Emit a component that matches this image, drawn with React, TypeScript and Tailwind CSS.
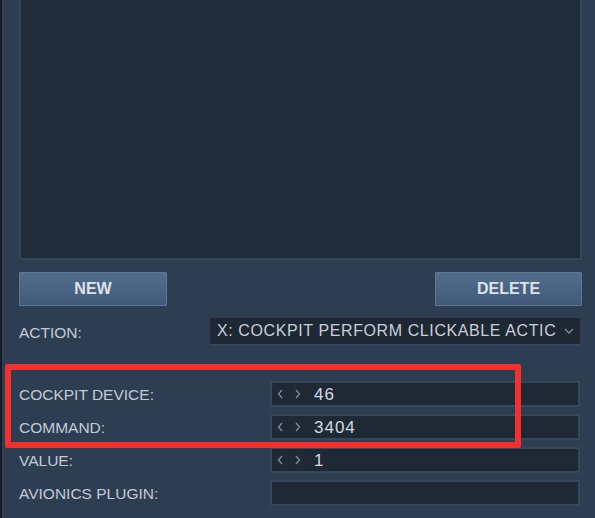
const font = { fontFamily: '"Liberation Sans", Arial, sans-serif' };

function Arrows() {
  return (
    <div className="flex items-center gap-[12px] pl-[5px] pr-[13px]">
      <svg width="6" height="10" viewBox="0 0 6 10">
        <path d="M5 1 L1.5 5 L5 9" fill="none" stroke="#7d8996" strokeWidth="1.4" />
      </svg>
      <svg width="6" height="10" viewBox="0 0 6 10">
        <path d="M1 1 L4.5 5 L1 9" fill="none" stroke="#7d8996" strokeWidth="1.4" />
      </svg>
    </div>
  );
}

function Row({ label, value, spin }: { label: string; value?: string; spin?: boolean }) {
  return (
    <div className="flex items-center h-[26px]">
      <div className="w-[251px] pt-[2px] text-[15.5px] text-[#c3cad3] leading-none">{label}</div>
      <div className="w-[310px] h-[26px] flex items-center bg-[#1f2935] border-2 border-[#37475a]">
        {spin && <Arrows />}
        {value && (
          <span className="text-[17px] tracking-[1px] text-[#d3d9e0] leading-none">{value}</span>
        )}
      </div>
    </div>
  );
}

function Btn({ label, w }: { label: string; w: string }) {
  return (
    <div
      className={`${w} h-[34px] flex items-center justify-center bg-gradient-to-b from-[#536d8c] to-[#415a79] border border-[#5c7797] rounded-[1px] text-[16px] font-bold text-[#dde3ea]`}
    >
      {label}
    </div>
  );
}

export default function App() {
  return (
    <div
      className="relative w-[595px] h-[518px] overflow-hidden bg-[#2d3e53] border-l-2 border-[#151c26]"
      style={font}
    >
      <div className="pl-[17px] flex flex-col">
        <div className="w-[563px] h-[260px] bg-[#212c3a] border-2 border-t-0 border-[#34465b]" />

        <div className="mt-[12px] flex justify-between w-[563px]">
          <Btn label="NEW" w="w-[148px]" />
          <Btn label="DELETE" w="w-[147px]" />
        </div>

        <div className="mt-[12px] flex items-center h-[28px]">
          <div className="w-[191px] pt-[2px] text-[15.5px] text-[#c3cad3] leading-none">ACTION:</div>
          <div className="w-[370px] h-[28px] flex items-center bg-[#1e2834] border-b-2 border-[#36475a]">
            <div className="w-[352px] pl-[7px] whitespace-nowrap text-[16px] tracking-[0.6px] text-[#c8cfd7] leading-none">
              X: COCKPIT PERFORM CLICKABLE ACTIC
            </div>
            <svg width="10" height="6" viewBox="0 0 10 6" className="ml-[2px]">
              <path d="M1 1 L5 5 L9 1" fill="none" stroke="#7d8996" strokeWidth="1.4" />
            </svg>
          </div>
        </div>

        <div className="mt-[35px] flex flex-col gap-[7px]">
          <Row label="COCKPIT DEVICE:" value="46" spin />
          <Row label="COMMAND:" value="3404" spin />
          <Row label="VALUE:" value="1" spin />
          <Row label="AVIONICS PLUGIN:" />
        </div>
      </div>

      <div className="absolute left-[3px] top-[364px] w-[516px] h-[84px] border-[6px] border-[#f2312f] rounded-[2px]" />
    </div>
  );
}
